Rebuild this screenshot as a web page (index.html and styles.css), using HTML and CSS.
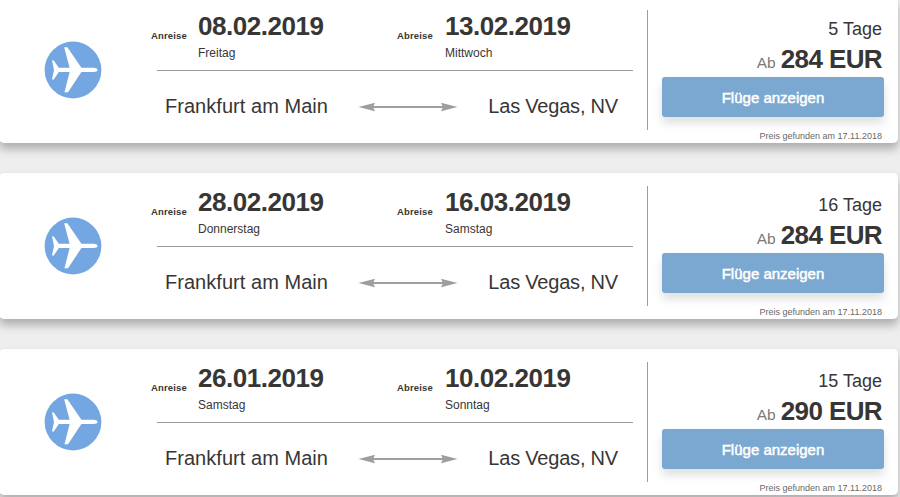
FILE: index.html
```
<!DOCTYPE html>
<html lang="de">
<head>
<meta charset="utf-8">
<title>Flüge</title>
<link rel="stylesheet" href="styles.css">
</head>
<body>
<svg width="0" height="0" class="defs">
  <symbol id="plane" viewBox="0 0 58 58">
    <circle cx="29" cy="29" r="28.4" fill="#74a7e2"/>
    <path fill="#fff" d="M20.2 6.3H23.4L37.4 26.7H49.5Q53.6 27.2 53.6 28.900Q53.6 30.6 49.500 31.100H37.4L24 51.200H20.500L25.6 31.100H14.8L9.8 38.4H8L10 28.900L8 19.400H9.8L14.8 26.700H25.600Z"/>
  </symbol>
  <symbol id="arrow" viewBox="0 0 100 10">
    <path fill="#9e9e9e" d="M0.500 5L17 .8L15.5 4H84.500L83 .8L99.500 5L83 9.200L84.500 6H15.500L17 9.200Z"/>
  </symbol>
</svg>
<main class="list">
  <article class="card">
    <div class="badge"><svg class="plane"><use href="#plane"/></svg></div>
    <div class="trip">
      <div class="dates">
        <span class="label">Anreise</span>
        <div class="when"><div class="date">08.02.2019</div><div class="day">Freitag</div></div>
        <span class="label">Abreise</span>
        <div class="when"><div class="date">13.02.2019</div><div class="day">Mittwoch</div></div>
      </div>
      <div class="route"><span class="city from">Frankfurt am Main</span><svg class="arrow"><use href="#arrow"/></svg><span class="city to">Las Vegas, NV</span></div>
    </div>
    <div class="offer">
      <div class="length">5 Tage</div>
      <div class="price"><span class="ab">Ab</span><strong>284 EUR</strong></div>
      <a class="button">Flüge anzeigen</a>
      <div class="note">Preis gefunden am 17.11.2018</div>
    </div>
  </article>
  <article class="card">
    <div class="badge"><svg class="plane"><use href="#plane"/></svg></div>
    <div class="trip">
      <div class="dates">
        <span class="label">Anreise</span>
        <div class="when"><div class="date">28.02.2019</div><div class="day">Donnerstag</div></div>
        <span class="label">Abreise</span>
        <div class="when"><div class="date">16.03.2019</div><div class="day">Samstag</div></div>
      </div>
      <div class="route"><span class="city from">Frankfurt am Main</span><svg class="arrow"><use href="#arrow"/></svg><span class="city to">Las Vegas, NV</span></div>
    </div>
    <div class="offer">
      <div class="length">16 Tage</div>
      <div class="price"><span class="ab">Ab</span><strong>284 EUR</strong></div>
      <a class="button">Flüge anzeigen</a>
      <div class="note">Preis gefunden am 17.11.2018</div>
    </div>
  </article>
  <article class="card">
    <div class="badge"><svg class="plane"><use href="#plane"/></svg></div>
    <div class="trip">
      <div class="dates">
        <span class="label">Anreise</span>
        <div class="when"><div class="date">26.01.2019</div><div class="day">Samstag</div></div>
        <span class="label">Abreise</span>
        <div class="when"><div class="date">10.02.2019</div><div class="day">Sonntag</div></div>
      </div>
      <div class="route"><span class="city from">Frankfurt am Main</span><svg class="arrow"><use href="#arrow"/></svg><span class="city to">Las Vegas, NV</span></div>
    </div>
    <div class="offer">
      <div class="length">15 Tage</div>
      <div class="price"><span class="ab">Ab</span><strong>290 EUR</strong></div>
      <a class="button">Flüge anzeigen</a>
      <div class="note">Preis gefunden am 17.11.2018</div>
    </div>
  </article>
</main>
</body>
</html>
```

FILE: styles.css
```
* { box-sizing: border-box; }

body {
  margin: 0;
  height: 497px;
  overflow: hidden;
  background: #eee;
  color: #383635;
  font-family: "Liberation Sans", Arial, sans-serif;
}

.defs { display: block; }

.list {
  display: flex;
  flex-direction: column;
  gap: 30px;
  width: 899px;
  margin: -3px 0 0 -1px;
}

.card {
  display: grid;
  grid-template-columns: 152px 496px 1fr;
  height: 146px;
  background: #fff;
  border-radius: 5px;
  box-shadow: 0 6px 10px rgba(0, 0, 0, .28);
}

.badge {
  display: flex;
  align-items: center;
  padding-left: 45px;
}

.plane { width: 58px; height: 58px; }

.trip { padding-top: 14px; }

.dates {
  display: grid;
  grid-template-columns: 47px 199px 48px 1fr;
  height: 50px;
}

.label {
  padding-top: 19px;
  font-size: 9.5px;
  line-height: 12px;
  font-weight: bold;
  letter-spacing: .15px;
}

.date {
  font-size: 26px;
  line-height: 30px;
  font-weight: bold;
  letter-spacing: -.45px;
}

.day {
  margin-top: 4px;
  font-size: 12px;
  line-height: 16px;
}

.route {
  display: flex;
  width: 476px;
  margin: 9px 0 0 6px;
  padding: 23px 15px 0 8px;
  border-top: 1px solid #9c9c9c;
}

.city {
  font-size: 20px;
  line-height: 24px;
  white-space: nowrap;
}

.to { margin-left: auto; letter-spacing: -.2px; }

.from { width: 193px; letter-spacing: .04px; }

.arrow {
  width: 100px;
  height: 10px;
  margin-top: 8px;
}

.offer {
  display: flex;
  flex-direction: column;
  margin: 13px 0;
  height: 120px;
  padding: 8px 14px 0;
  border-left: 1px solid #9c9c9c;
  text-align: right;
}

.length {
  padding-right: 2px;
  font-size: 18px;
  line-height: 22px;
}

.price {
  display: flex;
  justify-content: flex-end;
  align-items: baseline;
  gap: 5px;
  height: 30px;
  margin-top: 4px;
  padding-right: 2px;
  line-height: 30px;
}

.price strong { font-size: 26px; letter-spacing: -.6px; }

.ab { font-size: 15.5px; color: #7b7b7b; }

.button {
  flex: none;
  height: 40px;
  margin-top: 3px;
  border-radius: 3px;
  background: #7aa8d0;
  box-shadow: 0 6px 10px rgba(0, 0, 0, .13);
  color: #fff;
  font-size: 15px;
  line-height: 42px;
  text-align: center;
  -webkit-text-stroke: .5px #fff;
}

.note {
  margin-top: 13px;
  padding-right: 2px;
  font-size: 9px;
  line-height: 12px;
  color: #686868;
}
```
